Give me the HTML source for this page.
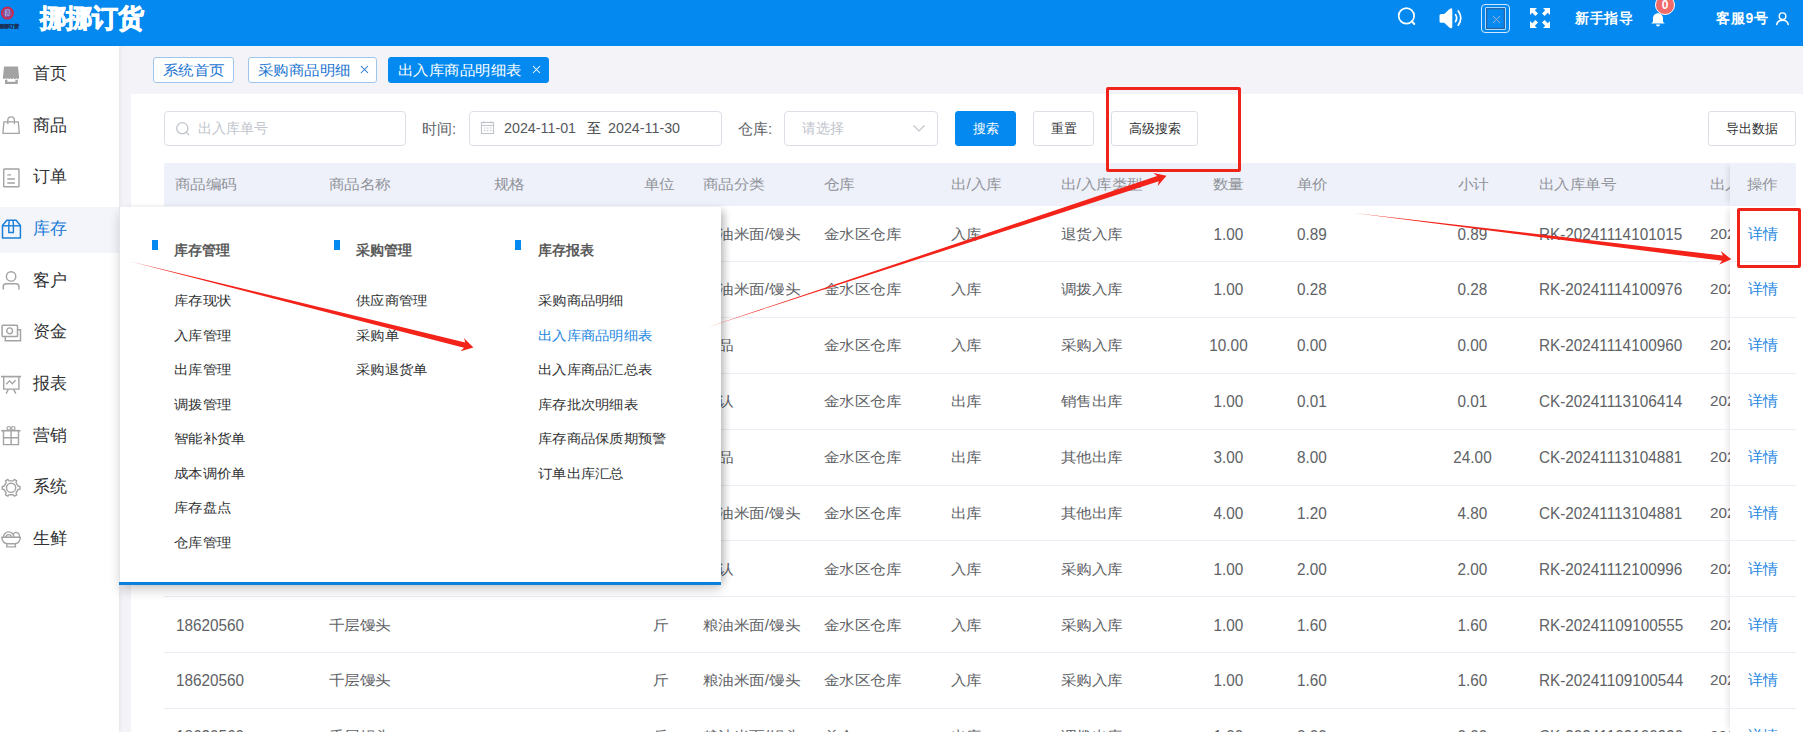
<!DOCTYPE html><html><head><meta charset="utf-8"><style>
*{box-sizing:border-box;margin:0;padding:0}
html,body{width:1803px;height:732px;overflow:hidden;background:#f4f4f8;font-family:"Liberation Sans",sans-serif;color:#606266}
.a{position:absolute;white-space:nowrap}
#hd{left:0;top:0;width:1803px;height:46px;background:#0389ef}
#title{left:40px;top:0px;font-size:26px;font-weight:900;color:#fff;line-height:36px;-webkit-text-stroke:.8px #fff}
#sb{left:0;top:46px;width:119px;height:686px;background:#fff;box-shadow:1px 0 4px rgba(0,0,0,.07)}
.mt{left:33px;font-size:17px;line-height:24px;color:#303133}
.tab{height:26px;top:57px;border:1px solid #9cc6ec;border-radius:3px;background:#fff;color:#1b75d0;font-size:15px;line-height:24px}
.tab.on{background:#0389ef;border-color:#0389ef;color:#fff}
#panel{left:131px;top:94px;width:1672px;height:638px;background:#fff}
.inp{border:1px solid #dcdfe6;border-radius:4px;background:#fff;height:35px;top:111px}
.lbl{font-size:14.3px;color:#606266;top:111px;line-height:35px}
.btn{top:111px;height:35px;border:1px solid #dcdfe6;border-radius:3px;background:#fff;font-size:13px;color:#303133;text-align:center;line-height:33px}
#thead{left:164px;top:163px;width:1632px;height:43px;background:#eef1f9}
.th{top:161.6px;line-height:43px;font-size:15px;color:#909399;transform:scale(1.03,.92);transform-origin:0 55%}
.ln{left:164px;width:1632px;height:1px;background:#ebeef5}
.td{font-size:15.3px;color:#606266;line-height:20px}
.dd{font-size:14px;line-height:20px;color:#303133;transform:scale(1.02,.92);transform-origin:0 55%}
.dh{font-size:14px;line-height:20px;color:#5a5a5a;font-weight:bold}
.mk{width:6px;height:10px;background:#0389ef}
</style></head><body>
<div id="hd" class="a"></div>
<svg class="a" style="left:0;top:0" width="30" height="32" viewBox="0 0 30 32">
<circle cx="7.4" cy="13.1" r="5.6" fill="#8d4f93" stroke="#d0284c" stroke-width="1.8"/>
<path d="M5.4 16.6V9.8h3.8v5.6H6.9V11" fill="none" stroke="#9db4f0" stroke-width=".9"/>
<text x="-1" y="28" font-size="5" font-weight="bold" fill="#1b3158" stroke="#1b3158" stroke-width=".3" font-family="Liberation Sans, sans-serif">挪挪订货</text>
</svg>
<div id="title" class="a">挪挪订货</div>
<svg class="a" style="left:1396px;top:7px" width="22" height="22" viewBox="0 0 22 22">
<circle cx="10.4" cy="8.9" r="7.7" fill="none" stroke="#fff" stroke-width="1.7"/>
<path d="M15.9 14.4l2.4 2.6" stroke="#fff" stroke-width="2" stroke-linecap="round"/></svg>
<svg class="a" style="left:1438px;top:7px" width="27" height="23" viewBox="0 0 27 23">
<path d="M1.5 8.6Q1.5 7 3.1 7H6.2L11.6 2Q14.3 .2 14.3 3V19.6q0 2.8-2.7 1.1L6.2 15.8H3.1Q1.5 15.8 1.5 14.2Z" fill="#fff"/>
<path d="M17.5 7.6q2.3 3.5 0 7" fill="none" stroke="#fff" stroke-width="1.7" stroke-linecap="round"/>
<path d="M20.3 4q5 7.1 0 14.2" fill="none" stroke="#fff" stroke-width="1.7" stroke-linecap="round"/></svg>
<div class="a" style="left:1481px;top:4px;width:29px;height:29px;border:1.6px solid #d3e9ff;border-radius:4px"></div>
<div class="a" style="left:1484.8px;top:6.8px;width:21.6px;height:23.1px;border:1px solid #a6dcff;box-shadow:inset 0 0 0 1.3px #2a64a6;border-radius:1px"></div>
<svg class="a" style="left:1491.5px;top:14.5px" width="9" height="9" viewBox="0 0 9 9"><path d="M1 1l7 7M8 1L1 8" stroke="#8fb0d0" stroke-width="1"/></svg>
<svg class="a" style="left:1529px;top:7px" width="22" height="22" viewBox="0 0 22 22" fill="#fff">
<path d="M1 1h7L5.8 3.2 9 6.4 6.4 9 3.2 5.8 1 8z"/>
<path d="M21 1v7L18.8 5.8 15.6 9 13 6.4 16.2 3.2 14 1z"/>
<path d="M1 21v-7l2.2 2.2L6.4 13 9 15.6 5.8 18.8 8 21z"/>
<path d="M21 21h-7l2.2-2.2L13 15.6 15.6 13l3.2 3.2L21 14z"/></svg>
<div class="a" style="left:1575px;top:8px;font-size:14px;line-height:20px;color:#fff;font-weight:bold;letter-spacing:.5px">新手指导</div>
<svg class="a" style="left:1650px;top:12px" width="16" height="15" viewBox="0 0 16 15" fill="#fff">
<path d="M8 1.2c-3 0-5 2.3-5 5.3v3.3L1.2 11.6h13.6L13 9.8V6.5C13 3.5 11 1.2 8 1.2z"/>
<path d="M6 12.5h4a2 2 0 0 1-4 0z"/></svg>
<div class="a" style="left:1655px;top:-5px;width:20px;height:20px;border-radius:10px;background:#f06a6a;border:1px solid #fff;color:#fff;font-size:12px;line-height:18px;text-align:center;font-weight:bold">0</div>
<div class="a" style="left:1716px;top:8px;font-size:14px;line-height:20px;color:#fff;font-weight:bold;letter-spacing:.7px">客服9号</div>
<svg class="a" style="left:1775px;top:12px" width="15" height="14" viewBox="0 0 15 14">
<circle cx="7.5" cy="4.2" r="3.3" fill="none" stroke="#fff" stroke-width="1.4"/>
<path d="M1.6 13.2q.6-5 5.9-5t5.9 5" fill="none" stroke="#fff" stroke-width="1.4"/></svg>
<div id="sb" class="a"></div>
<div class="a" style="left:0;top:207px;width:119px;height:46px;background:#f3f5fa"></div>
<svg class="a" style="left:1px;top:64.50px;overflow:visible" width="22" height="22" viewBox="0 0 22 22"><path d="M3 1.6h14l1.1 11.5q-.6 1.1-1.4 1.1t-1.4-1.1q-.6 1.1-1.4 1.1t-1.4-1.1q-.6 1.1-1.4 1.1t-1.4-1.1q-.6 1.1-1.4 1.1t-1.4-1.1q-.6 1.1-1.4 1.1t-1.4-1.1q-.6 1.1-1.3 1.1T1.9 13.1z" fill="#a3a3a3"/><path d="M5.2 14.8v3.1h10.4v-3.1" fill="none" stroke="#a3a3a3" stroke-width="2.4"/></svg>
<div class="a mt" style="top:62.0px;color:#303133">首页</div>
<svg class="a" style="left:1px;top:116.15px;overflow:visible" width="22" height="22" viewBox="0 0 22 22"><path d="M2.9 5.9h14.4l1 11.5H1.9z" fill="none" stroke="#a3a3a3" stroke-width="1.3" stroke-linejoin="round"/><path d="M6.8 8.2V4.4q0-3.5 3.3-3.5t3.3 3.5v3.8" fill="none" stroke="#a3a3a3" stroke-width="1.3"/></svg>
<div class="a mt" style="top:113.7px;color:#303133">商品</div>
<svg class="a" style="left:1px;top:167.80px;overflow:visible" width="22" height="22" viewBox="0 0 22 22"><rect x="2.7" y="1" width="15.3" height="17.8" rx=".6" fill="none" stroke="#a3a3a3" stroke-width="1.4"/><path d="M6.3 6.9h3.7M6.3 11h7.6M6.3 15h7.6" stroke="#a3a3a3" stroke-width="1.3"/></svg>
<div class="a mt" style="top:165.3px;color:#303133">订单</div>
<svg class="a" style="left:1px;top:219.45px;overflow:visible" width="22" height="22" viewBox="0 0 22 22"><path d="M1.5 6.4L5.8 1.2h9.3l4.3 5.2v12.5H1.5z" fill="none" stroke="#1a7fd8" stroke-width="1.5" stroke-linejoin="round"/><path d="M1.5 6.8h17.9" stroke="#1a7fd8" stroke-width="1.4"/><path d="M8.3 1.2L7.8 5.2v8.3h4.6V5.2l-.5-4" fill="none" stroke="#1a7fd8" stroke-width="1.4"/></svg>
<div class="a mt" style="top:216.9px;color:#1a7ad6">库存</div>
<svg class="a" style="left:1px;top:271.10px;overflow:visible" width="22" height="22" viewBox="0 0 22 22"><circle cx="10.1" cy="5.4" r="4.7" fill="none" stroke="#a3a3a3" stroke-width="1.4"/><path d="M2.3 18.6v-3q0-2.8 2.8-2.8h10q2.8 0 2.8 2.8v3" fill="none" stroke="#a3a3a3" stroke-width="1.5"/></svg>
<div class="a mt" style="top:268.6px;color:#303133">客户</div>
<svg class="a" style="left:1px;top:322.75px;overflow:visible" width="22" height="22" viewBox="0 0 22 22"><rect x="1.1" y="2.2" width="15.4" height="11.3" rx=".8" fill="none" stroke="#a3a3a3" stroke-width="1.5"/><circle cx="8.6" cy="7.8" r="2.9" fill="none" stroke="#a3a3a3" stroke-width="1.4"/><path d="M16.6 6.8h2.9v10.9H4.3v-4.1" fill="none" stroke="#a3a3a3" stroke-width="1.5"/></svg>
<div class="a mt" style="top:320.2px;color:#303133">资金</div>
<svg class="a" style="left:1px;top:374.40px;overflow:visible" width="22" height="22" viewBox="0 0 22 22"><path d="M0 2.6h20.1" stroke="#a3a3a3" stroke-width="1.7"/><path d="M2.7 2.6v12.5h15.2V2.6" fill="none" stroke="#a3a3a3" stroke-width="1.4"/><path d="M5.1 10.2l3.5-3.3 2.7 2.9 3.3-3.7" fill="none" stroke="#a3a3a3" stroke-width="1.3"/><path d="M7.4 15.1l-2.3 4.5M12.5 15.1l2.3 4.5" stroke="#a3a3a3" stroke-width="1.4"/></svg>
<div class="a mt" style="top:371.9px;color:#303133">报表</div>
<svg class="a" style="left:1px;top:426.05px;overflow:visible" width="22" height="22" viewBox="0 0 22 22"><path d="M0.2 4.7h19.3" stroke="#a3a3a3" stroke-width="1.6"/><path d="M2.5 4.7v13.9h15V4.7" fill="none" stroke="#a3a3a3" stroke-width="1.4"/><path d="M10.1 4.7v13.9M2.5 11.7h15" stroke="#a3a3a3" stroke-width="1.4"/><circle cx="7.8" cy="2.3" r="1.8" fill="none" stroke="#a3a3a3" stroke-width="1.2"/><circle cx="12.3" cy="2.3" r="1.8" fill="none" stroke="#a3a3a3" stroke-width="1.2"/></svg>
<div class="a mt" style="top:423.6px;color:#303133">营销</div>
<svg class="a" style="left:1px;top:477.70px;overflow:visible" width="22" height="22" viewBox="0 0 22 22"><path d="M17.12 8.18 L18.99 8.39 L18.99 11.21 L17.12 11.42 L15.01 15.07 L15.76 16.79 L13.33 18.20 L12.21 16.69 L7.99 16.69 L6.87 18.20 L4.44 16.79 L5.19 15.07 L3.08 11.42 L1.21 11.21 L1.21 8.39 L3.08 8.18 L5.19 4.53 L4.44 2.81 L6.87 1.40 L7.99 2.91 L12.21 2.91 L13.33 1.40 L15.76 2.81 L15.01 4.53Z" fill="none" stroke="#a3a3a3" stroke-width="1.4" stroke-linejoin="round"/><circle cx="10.1" cy="9.8" r="4.6" fill="none" stroke="#a3a3a3" stroke-width="1.4"/></svg>
<div class="a mt" style="top:475.2px;color:#303133">系统</div>
<svg class="a" style="left:1px;top:529.35px;overflow:visible" width="22" height="22" viewBox="0 0 22 22"><path d="M0.8 8.2h18.6q-.4 6.3-6.3 6.5H7.1Q1.2 14.5.8 8.2z" fill="none" stroke="#a3a3a3" stroke-width="1.4" stroke-linejoin="round"/><path d="M5.8 14.7v3.2h8.6v-3.2" fill="none" stroke="#a3a3a3" stroke-width="1.4"/><path d="M2.4 8.2a5.3 5.3 0 0 1 10.6 0M5.1 8.2a2.6 2.6 0 0 1 5.2 0M12.4 5.2a3.1 3.1 0 0 1 5.6 3" fill="none" stroke="#a3a3a3" stroke-width="1.4"/></svg>
<div class="a mt" style="top:526.8px;color:#303133">生鲜</div>
<div id="panel" class="a"></div>
<div class="a tab" style="left:153px;width:81px"><span class="a" style="left:9px;top:0;transform:scale(1.03,.93);transform-origin:0 55%">系统首页</span></div>
<div class="a tab" style="left:248px;width:129px"><span class="a" style="left:9px;top:0;transform:scale(1.03,.93);transform-origin:0 55%">采购商品明细</span><svg class="a" style="right:7.5px;top:6.5px" width="9" height="9" viewBox="0 0 9 9"><path d="M1 1l7 7M8 1L1 8" stroke="#1b75d0" stroke-width="1.05"/></svg></div>
<div class="a tab on" style="left:388px;width:161px"><span class="a" style="left:9px;top:0;transform:scale(1.03,.93);transform-origin:0 55%">出入库商品明细表</span><svg class="a" style="right:7.5px;top:6.5px" width="9" height="9" viewBox="0 0 9 9"><path d="M1 1l7 7M8 1L1 8" stroke="#fff" stroke-width="1.05"/></svg></div>
<div class="a inp" style="left:164px;width:242px"></div>
<svg class="a" style="left:175px;top:121px" width="16" height="16" viewBox="0 0 16 16"><circle cx="7.3" cy="7.3" r="5.6" fill="none" stroke="#c0c4cc" stroke-width="1.3"/><path d="M11.4 11.4l2.6 2.6" stroke="#c0c4cc" stroke-width="1.3"/></svg>
<div class="a lbl" style="left:198px;color:#c0c4cc">出入库单号</div>
<div class="a lbl" style="left:422px;font-size:15px">时间:</div>
<div class="a inp" style="left:469px;width:253px"></div>
<svg class="a" style="left:480px;top:120px" width="15" height="15" viewBox="0 0 15 15"><rect x="1.5" y="2.5" width="12" height="11" fill="none" stroke="#c0c4cc" stroke-width="1.1"/><path d="M1.5 5.5h12M4 1v2.5M11 1v2.5M4 8h1.5M7 8h1.5M10 8h1.5M4 10.5h1.5M7 10.5h1.5M10 10.5h1.5" stroke="#c0c4cc" stroke-width="1"/></svg>
<div class="a lbl" style="left:504px;color:#55585e">2024-11-01</div>
<div class="a lbl" style="left:587px;color:#303133">至</div>
<div class="a lbl" style="left:608px;color:#55585e">2024-11-30</div>
<div class="a lbl" style="left:738px;font-size:15px">仓库:</div>
<div class="a inp" style="left:784px;width:154px"></div>
<div class="a lbl" style="left:802px;color:#c0c4cc">请选择</div>
<svg class="a" style="left:912px;top:123px" width="14" height="10" viewBox="0 0 14 10"><path d="M1.5 2.5l5.5 5.5 5.5-5.5" fill="none" stroke="#c0c4cc" stroke-width="1.2"/></svg>
<div class="a btn" style="left:955px;width:61px;background:#0389ef;border-color:#0389ef;color:#fff">搜索</div>
<div class="a btn" style="left:1033px;width:61px">重置</div>
<div class="a btn" style="left:1111px;width:87px">高级搜索</div>
<div class="a btn" style="left:1708px;width:88px">导出数据</div>
<div id="thead" class="a"></div>
<div class="a th" style="left:175px">商品编码</div>
<div class="a th" style="left:329px">商品名称</div>
<div class="a th" style="left:494px">规格</div>
<div class="a th" style="left:644px">单位</div>
<div class="a th" style="left:703px">商品分类</div>
<div class="a th" style="left:824px">仓库</div>
<div class="a th" style="left:951px">出/入库</div>
<div class="a th" style="left:1061px">出/入库类型</div>
<div class="a th" style="left:1213px">数量</div>
<div class="a th" style="left:1297px">单价</div>
<div class="a th" style="left:1458px">小计</div>
<div class="a th" style="left:1539px">出入库单号</div>
<div class="a th" style="left:1710px">出入库时间</div>
<div class="a td" style="left:176px;top:223.5px;transform:scaleY(1.09);transform-origin:0 5px;"></div>
<div class="a td" style="left:329px;top:223.5px;transform:scaleY(1.09);transform-origin:0 5px;"></div>
<div class="a td" style="left:599px;width:120px;text-align:center;top:223.5px;transform:scaleY(1.09);transform-origin:0 5px;"></div>
<div class="a td" style="left:703px;top:223.5px;font-size:15px;transform:scale(1.03,.92);transform-origin:0 55%;">粮油米面/馒头</div>
<div class="a td" style="left:824px;top:223.5px;font-size:15px;transform:scale(1.03,.92);transform-origin:0 55%;">金水区仓库</div>
<div class="a td" style="left:951px;top:223.5px;font-size:15px;transform:scale(1.03,.92);transform-origin:0 55%;">入库</div>
<div class="a td" style="left:1061px;top:223.5px;font-size:15px;transform:scale(1.03,.92);transform-origin:0 55%;">退货入库</div>
<div class="a td" style="left:1168.5px;width:120px;text-align:center;top:223.5px;transform:scaleY(1.09);transform-origin:0 5px;">1.00</div>
<div class="a td" style="left:1297px;top:223.5px;transform:scaleY(1.09);transform-origin:0 5px;">0.89</div>
<div class="a td" style="left:1412.5px;width:120px;text-align:center;top:223.5px;transform:scaleY(1.09);transform-origin:0 5px;">0.89</div>
<div class="a td" style="left:1539px;top:223.5px;transform:scaleY(1.09);transform-origin:0 5px;">RK-20241114101015</div>
<div class="a td" style="left:1710px;top:223.5px">2024-11-14 10:10:15</div>
<div class="a td" style="left:176px;top:279.4px;transform:scaleY(1.09);transform-origin:0 5px;"></div>
<div class="a td" style="left:329px;top:279.4px;transform:scaleY(1.09);transform-origin:0 5px;"></div>
<div class="a td" style="left:599px;width:120px;text-align:center;top:279.4px;transform:scaleY(1.09);transform-origin:0 5px;"></div>
<div class="a td" style="left:703px;top:279.4px;font-size:15px;transform:scale(1.03,.92);transform-origin:0 55%;">粮油米面/馒头</div>
<div class="a td" style="left:824px;top:279.4px;font-size:15px;transform:scale(1.03,.92);transform-origin:0 55%;">金水区仓库</div>
<div class="a td" style="left:951px;top:279.4px;font-size:15px;transform:scale(1.03,.92);transform-origin:0 55%;">入库</div>
<div class="a td" style="left:1061px;top:279.4px;font-size:15px;transform:scale(1.03,.92);transform-origin:0 55%;">调拨入库</div>
<div class="a td" style="left:1168.5px;width:120px;text-align:center;top:279.4px;transform:scaleY(1.09);transform-origin:0 5px;">1.00</div>
<div class="a td" style="left:1297px;top:279.4px;transform:scaleY(1.09);transform-origin:0 5px;">0.28</div>
<div class="a td" style="left:1412.5px;width:120px;text-align:center;top:279.4px;transform:scaleY(1.09);transform-origin:0 5px;">0.28</div>
<div class="a td" style="left:1539px;top:279.4px;transform:scaleY(1.09);transform-origin:0 5px;">RK-20241114100976</div>
<div class="a td" style="left:1710px;top:279.4px">2024-11-14 10:10:15</div>
<div class="a td" style="left:176px;top:335.2px;transform:scaleY(1.09);transform-origin:0 5px;">18620561</div>
<div class="a td" style="left:329px;top:335.2px;font-size:15px;transform:scale(1.03,.92);transform-origin:0 55%;">冻品饺子</div>
<div class="a td" style="left:599px;width:120px;text-align:center;top:335.2px;font-size:15px;transform:scale(1.03,.92);transform-origin:0 55%;">袋</div>
<div class="a td" style="left:703px;top:335.2px;font-size:15px;transform:scale(1.03,.92);transform-origin:0 55%;">冻品</div>
<div class="a td" style="left:824px;top:335.2px;font-size:15px;transform:scale(1.03,.92);transform-origin:0 55%;">金水区仓库</div>
<div class="a td" style="left:951px;top:335.2px;font-size:15px;transform:scale(1.03,.92);transform-origin:0 55%;">入库</div>
<div class="a td" style="left:1061px;top:335.2px;font-size:15px;transform:scale(1.03,.92);transform-origin:0 55%;">采购入库</div>
<div class="a td" style="left:1168.5px;width:120px;text-align:center;top:335.2px;transform:scaleY(1.09);transform-origin:0 5px;">10.00</div>
<div class="a td" style="left:1297px;top:335.2px;transform:scaleY(1.09);transform-origin:0 5px;">0.00</div>
<div class="a td" style="left:1412.5px;width:120px;text-align:center;top:335.2px;transform:scaleY(1.09);transform-origin:0 5px;">0.00</div>
<div class="a td" style="left:1539px;top:335.2px;transform:scaleY(1.09);transform-origin:0 5px;">RK-20241114100960</div>
<div class="a td" style="left:1710px;top:335.2px">2024-11-14 10:10:15</div>
<div class="a td" style="left:176px;top:391.1px;transform:scaleY(1.09);transform-origin:0 5px;">18620562</div>
<div class="a td" style="left:329px;top:391.1px;font-size:15px;transform:scale(1.03,.92);transform-origin:0 55%;">测试商品</div>
<div class="a td" style="left:599px;width:120px;text-align:center;top:391.1px;font-size:15px;transform:scale(1.03,.92);transform-origin:0 55%;">个</div>
<div class="a td" style="left:703px;top:391.1px;font-size:15px;transform:scale(1.03,.92);transform-origin:0 55%;">默认</div>
<div class="a td" style="left:824px;top:391.1px;font-size:15px;transform:scale(1.03,.92);transform-origin:0 55%;">金水区仓库</div>
<div class="a td" style="left:951px;top:391.1px;font-size:15px;transform:scale(1.03,.92);transform-origin:0 55%;">出库</div>
<div class="a td" style="left:1061px;top:391.1px;font-size:15px;transform:scale(1.03,.92);transform-origin:0 55%;">销售出库</div>
<div class="a td" style="left:1168.5px;width:120px;text-align:center;top:391.1px;transform:scaleY(1.09);transform-origin:0 5px;">1.00</div>
<div class="a td" style="left:1297px;top:391.1px;transform:scaleY(1.09);transform-origin:0 5px;">0.01</div>
<div class="a td" style="left:1412.5px;width:120px;text-align:center;top:391.1px;transform:scaleY(1.09);transform-origin:0 5px;">0.01</div>
<div class="a td" style="left:1539px;top:391.1px;transform:scaleY(1.09);transform-origin:0 5px;">CK-20241113106414</div>
<div class="a td" style="left:1710px;top:391.1px">2024-11-14 10:10:15</div>
<div class="a td" style="left:176px;top:446.9px;transform:scaleY(1.09);transform-origin:0 5px;">18620563</div>
<div class="a td" style="left:329px;top:446.9px;font-size:15px;transform:scale(1.03,.92);transform-origin:0 55%;">冻品汤圆</div>
<div class="a td" style="left:599px;width:120px;text-align:center;top:446.9px;font-size:15px;transform:scale(1.03,.92);transform-origin:0 55%;">袋</div>
<div class="a td" style="left:703px;top:446.9px;font-size:15px;transform:scale(1.03,.92);transform-origin:0 55%;">冻品</div>
<div class="a td" style="left:824px;top:446.9px;font-size:15px;transform:scale(1.03,.92);transform-origin:0 55%;">金水区仓库</div>
<div class="a td" style="left:951px;top:446.9px;font-size:15px;transform:scale(1.03,.92);transform-origin:0 55%;">出库</div>
<div class="a td" style="left:1061px;top:446.9px;font-size:15px;transform:scale(1.03,.92);transform-origin:0 55%;">其他出库</div>
<div class="a td" style="left:1168.5px;width:120px;text-align:center;top:446.9px;transform:scaleY(1.09);transform-origin:0 5px;">3.00</div>
<div class="a td" style="left:1297px;top:446.9px;transform:scaleY(1.09);transform-origin:0 5px;">8.00</div>
<div class="a td" style="left:1412.5px;width:120px;text-align:center;top:446.9px;transform:scaleY(1.09);transform-origin:0 5px;">24.00</div>
<div class="a td" style="left:1539px;top:446.9px;transform:scaleY(1.09);transform-origin:0 5px;">CK-20241113104881</div>
<div class="a td" style="left:1710px;top:446.9px">2024-11-14 10:10:15</div>
<div class="a td" style="left:176px;top:502.8px;transform:scaleY(1.09);transform-origin:0 5px;">18620560</div>
<div class="a td" style="left:329px;top:502.8px;font-size:15px;transform:scale(1.03,.92);transform-origin:0 55%;">千层馒头</div>
<div class="a td" style="left:599px;width:120px;text-align:center;top:502.8px;font-size:15px;transform:scale(1.03,.92);transform-origin:0 55%;">斤</div>
<div class="a td" style="left:703px;top:502.8px;font-size:15px;transform:scale(1.03,.92);transform-origin:0 55%;">粮油米面/馒头</div>
<div class="a td" style="left:824px;top:502.8px;font-size:15px;transform:scale(1.03,.92);transform-origin:0 55%;">金水区仓库</div>
<div class="a td" style="left:951px;top:502.8px;font-size:15px;transform:scale(1.03,.92);transform-origin:0 55%;">出库</div>
<div class="a td" style="left:1061px;top:502.8px;font-size:15px;transform:scale(1.03,.92);transform-origin:0 55%;">其他出库</div>
<div class="a td" style="left:1168.5px;width:120px;text-align:center;top:502.8px;transform:scaleY(1.09);transform-origin:0 5px;">4.00</div>
<div class="a td" style="left:1297px;top:502.8px;transform:scaleY(1.09);transform-origin:0 5px;">1.20</div>
<div class="a td" style="left:1412.5px;width:120px;text-align:center;top:502.8px;transform:scaleY(1.09);transform-origin:0 5px;">4.80</div>
<div class="a td" style="left:1539px;top:502.8px;transform:scaleY(1.09);transform-origin:0 5px;">CK-20241113104881</div>
<div class="a td" style="left:1710px;top:502.8px">2024-11-14 10:10:15</div>
<div class="a td" style="left:176px;top:558.6px;transform:scaleY(1.09);transform-origin:0 5px;">18620564</div>
<div class="a td" style="left:329px;top:558.6px;font-size:15px;transform:scale(1.03,.92);transform-origin:0 55%;">测试商品</div>
<div class="a td" style="left:599px;width:120px;text-align:center;top:558.6px;font-size:15px;transform:scale(1.03,.92);transform-origin:0 55%;">个</div>
<div class="a td" style="left:703px;top:558.6px;font-size:15px;transform:scale(1.03,.92);transform-origin:0 55%;">默认</div>
<div class="a td" style="left:824px;top:558.6px;font-size:15px;transform:scale(1.03,.92);transform-origin:0 55%;">金水区仓库</div>
<div class="a td" style="left:951px;top:558.6px;font-size:15px;transform:scale(1.03,.92);transform-origin:0 55%;">入库</div>
<div class="a td" style="left:1061px;top:558.6px;font-size:15px;transform:scale(1.03,.92);transform-origin:0 55%;">采购入库</div>
<div class="a td" style="left:1168.5px;width:120px;text-align:center;top:558.6px;transform:scaleY(1.09);transform-origin:0 5px;">1.00</div>
<div class="a td" style="left:1297px;top:558.6px;transform:scaleY(1.09);transform-origin:0 5px;">2.00</div>
<div class="a td" style="left:1412.5px;width:120px;text-align:center;top:558.6px;transform:scaleY(1.09);transform-origin:0 5px;">2.00</div>
<div class="a td" style="left:1539px;top:558.6px;transform:scaleY(1.09);transform-origin:0 5px;">RK-20241112100996</div>
<div class="a td" style="left:1710px;top:558.6px">2024-11-14 10:10:15</div>
<div class="a td" style="left:176px;top:614.5px;transform:scaleY(1.09);transform-origin:0 5px;">18620560</div>
<div class="a td" style="left:329px;top:614.5px;font-size:15px;transform:scale(1.03,.92);transform-origin:0 55%;">千层馒头</div>
<div class="a td" style="left:599px;width:120px;text-align:center;top:614.5px;font-size:15px;transform:scale(1.03,.92);transform-origin:0 55%;">斤</div>
<div class="a td" style="left:703px;top:614.5px;font-size:15px;transform:scale(1.03,.92);transform-origin:0 55%;">粮油米面/馒头</div>
<div class="a td" style="left:824px;top:614.5px;font-size:15px;transform:scale(1.03,.92);transform-origin:0 55%;">金水区仓库</div>
<div class="a td" style="left:951px;top:614.5px;font-size:15px;transform:scale(1.03,.92);transform-origin:0 55%;">入库</div>
<div class="a td" style="left:1061px;top:614.5px;font-size:15px;transform:scale(1.03,.92);transform-origin:0 55%;">采购入库</div>
<div class="a td" style="left:1168.5px;width:120px;text-align:center;top:614.5px;transform:scaleY(1.09);transform-origin:0 5px;">1.00</div>
<div class="a td" style="left:1297px;top:614.5px;transform:scaleY(1.09);transform-origin:0 5px;">1.60</div>
<div class="a td" style="left:1412.5px;width:120px;text-align:center;top:614.5px;transform:scaleY(1.09);transform-origin:0 5px;">1.60</div>
<div class="a td" style="left:1539px;top:614.5px;transform:scaleY(1.09);transform-origin:0 5px;">RK-20241109100555</div>
<div class="a td" style="left:1710px;top:614.5px">2024-11-14 10:10:15</div>
<div class="a td" style="left:176px;top:670.3px;transform:scaleY(1.09);transform-origin:0 5px;">18620560</div>
<div class="a td" style="left:329px;top:670.3px;font-size:15px;transform:scale(1.03,.92);transform-origin:0 55%;">千层馒头</div>
<div class="a td" style="left:599px;width:120px;text-align:center;top:670.3px;font-size:15px;transform:scale(1.03,.92);transform-origin:0 55%;">斤</div>
<div class="a td" style="left:703px;top:670.3px;font-size:15px;transform:scale(1.03,.92);transform-origin:0 55%;">粮油米面/馒头</div>
<div class="a td" style="left:824px;top:670.3px;font-size:15px;transform:scale(1.03,.92);transform-origin:0 55%;">金水区仓库</div>
<div class="a td" style="left:951px;top:670.3px;font-size:15px;transform:scale(1.03,.92);transform-origin:0 55%;">入库</div>
<div class="a td" style="left:1061px;top:670.3px;font-size:15px;transform:scale(1.03,.92);transform-origin:0 55%;">采购入库</div>
<div class="a td" style="left:1168.5px;width:120px;text-align:center;top:670.3px;transform:scaleY(1.09);transform-origin:0 5px;">1.00</div>
<div class="a td" style="left:1297px;top:670.3px;transform:scaleY(1.09);transform-origin:0 5px;">1.60</div>
<div class="a td" style="left:1412.5px;width:120px;text-align:center;top:670.3px;transform:scaleY(1.09);transform-origin:0 5px;">1.60</div>
<div class="a td" style="left:1539px;top:670.3px;transform:scaleY(1.09);transform-origin:0 5px;">RK-20241109100544</div>
<div class="a td" style="left:1710px;top:670.3px">2024-11-14 10:10:15</div>
<div class="a td" style="left:176px;top:726.2px;transform:scaleY(1.09);transform-origin:0 5px;">18620560</div>
<div class="a td" style="left:329px;top:726.2px;font-size:15px;transform:scale(1.03,.92);transform-origin:0 55%;">千层馒头</div>
<div class="a td" style="left:599px;width:120px;text-align:center;top:726.2px;font-size:15px;transform:scale(1.03,.92);transform-origin:0 55%;">斤</div>
<div class="a td" style="left:703px;top:726.2px;font-size:15px;transform:scale(1.03,.92);transform-origin:0 55%;">粮油米面/馒头</div>
<div class="a td" style="left:824px;top:726.2px;font-size:15px;transform:scale(1.03,.92);transform-origin:0 55%;">总仓</div>
<div class="a td" style="left:951px;top:726.2px;font-size:15px;transform:scale(1.03,.92);transform-origin:0 55%;">出库</div>
<div class="a td" style="left:1061px;top:726.2px;font-size:15px;transform:scale(1.03,.92);transform-origin:0 55%;">调拨出库</div>
<div class="a td" style="left:1168.5px;width:120px;text-align:center;top:726.2px;transform:scaleY(1.09);transform-origin:0 5px;">1.00</div>
<div class="a td" style="left:1297px;top:726.2px;transform:scaleY(1.09);transform-origin:0 5px;">0.00</div>
<div class="a td" style="left:1412.5px;width:120px;text-align:center;top:726.2px;transform:scaleY(1.09);transform-origin:0 5px;">0.00</div>
<div class="a td" style="left:1539px;top:726.2px;transform:scaleY(1.09);transform-origin:0 5px;">CK-20241109100990</div>
<div class="a td" style="left:1710px;top:726.2px">2024-11-14 10:10:15</div>
<div class="a" style="left:1730px;top:163px;width:66px;height:43px;background:#eef1f9;box-shadow:-5px 0 6px -3px rgba(0,0,0,.10)"></div>
<div class="a" style="left:1730px;top:206px;width:73px;height:526px;background:#fff;box-shadow:-5px 0 6px -3px rgba(0,0,0,.10)"></div>
<div class="a th" style="left:1747px">操作</div>
<div class="a td" style="left:1748px;top:223.5px;color:#1c86e0;font-size:15px">详情</div>
<div class="a ln" style="top:261px"></div>
<div class="a td" style="left:1748px;top:279.4px;color:#1c86e0;font-size:15px">详情</div>
<div class="a ln" style="top:317px"></div>
<div class="a td" style="left:1748px;top:335.2px;color:#1c86e0;font-size:15px">详情</div>
<div class="a ln" style="top:373px"></div>
<div class="a td" style="left:1748px;top:391.1px;color:#1c86e0;font-size:15px">详情</div>
<div class="a ln" style="top:429px"></div>
<div class="a td" style="left:1748px;top:446.9px;color:#1c86e0;font-size:15px">详情</div>
<div class="a ln" style="top:485px"></div>
<div class="a td" style="left:1748px;top:502.8px;color:#1c86e0;font-size:15px">详情</div>
<div class="a ln" style="top:540px"></div>
<div class="a td" style="left:1748px;top:558.6px;color:#1c86e0;font-size:15px">详情</div>
<div class="a ln" style="top:596px"></div>
<div class="a td" style="left:1748px;top:614.5px;color:#1c86e0;font-size:15px">详情</div>
<div class="a ln" style="top:652px"></div>
<div class="a td" style="left:1748px;top:670.3px;color:#1c86e0;font-size:15px">详情</div>
<div class="a ln" style="top:708px"></div>
<div class="a td" style="left:1748px;top:726.2px;color:#1c86e0;font-size:15px">详情</div>
<div class="a" style="left:119px;top:207px;width:602px;height:378px;background:#fff;border-bottom:3px solid #0b80dc;box-shadow:inset 1px 0 0 #e4e4e4,0 6px 10px rgba(0,0,0,.16),6px 0 8px -3px rgba(0,0,0,.2)"></div>
<div class="a mk" style="left:152px;top:240px"></div>
<div class="a dh" style="left:174px;top:240px">库存管理</div>
<div class="a dd" style="left:174px;top:290.0px;color:#303133">库存现状</div>
<div class="a dd" style="left:174px;top:324.6px;color:#303133">入库管理</div>
<div class="a dd" style="left:174px;top:359.1px;color:#303133">出库管理</div>
<div class="a dd" style="left:174px;top:393.7px;color:#303133">调拨管理</div>
<div class="a dd" style="left:174px;top:428.3px;color:#303133">智能补货单</div>
<div class="a dd" style="left:174px;top:462.9px;color:#303133">成本调价单</div>
<div class="a dd" style="left:174px;top:497.4px;color:#303133">库存盘点</div>
<div class="a dd" style="left:174px;top:532.0px;color:#303133">仓库管理</div>
<div class="a mk" style="left:334px;top:240px"></div>
<div class="a dh" style="left:356px;top:240px">采购管理</div>
<div class="a dd" style="left:356px;top:290.0px;color:#303133">供应商管理</div>
<div class="a dd" style="left:356px;top:324.6px;color:#303133">采购单</div>
<div class="a dd" style="left:356px;top:359.1px;color:#303133">采购退货单</div>
<div class="a mk" style="left:515px;top:240px"></div>
<div class="a dh" style="left:538px;top:240px">库存报表</div>
<div class="a dd" style="left:538px;top:290.0px;color:#303133">采购商品明细</div>
<div class="a dd" style="left:538px;top:324.6px;color:#1c86e0">出入库商品明细表</div>
<div class="a dd" style="left:538px;top:359.1px;color:#303133">出入库商品汇总表</div>
<div class="a dd" style="left:538px;top:393.7px;color:#303133">库存批次明细表</div>
<div class="a dd" style="left:538px;top:428.3px;color:#303133">库存商品保质期预警</div>
<div class="a dd" style="left:538px;top:462.9px;color:#303133">订单出库汇总</div>
<div class="a" style="left:1106px;top:87px;width:135px;height:85px;border:3px solid #f0231a;border-radius:2px"></div>
<div class="a" style="left:1737px;top:208px;width:64px;height:60px;border:3px solid #f0231a;border-radius:2px"></div>
<svg class="a" style="left:0;top:0" width="1803" height="732" viewBox="0 0 1803 732"><path d="M130.6 261.4 L464.0 347.8 L460.6 351.2 L473.4 347.4 L463.9 338.0 L465.3 342.6Z" fill="#f4231a"/><path d="M706.0 327.7 L1158.8 181.2 L1157.7 185.9 L1166.5 175.8 L1153.4 172.9 L1157.1 176.1Z" fill="#f4231a"/><path d="M1354.0 213.0 L1722.1 260.8 L1719.2 264.6 L1731.4 259.2 L1720.8 251.1 L1722.8 255.4Z" fill="#f4231a"/></svg>
</body></html>
